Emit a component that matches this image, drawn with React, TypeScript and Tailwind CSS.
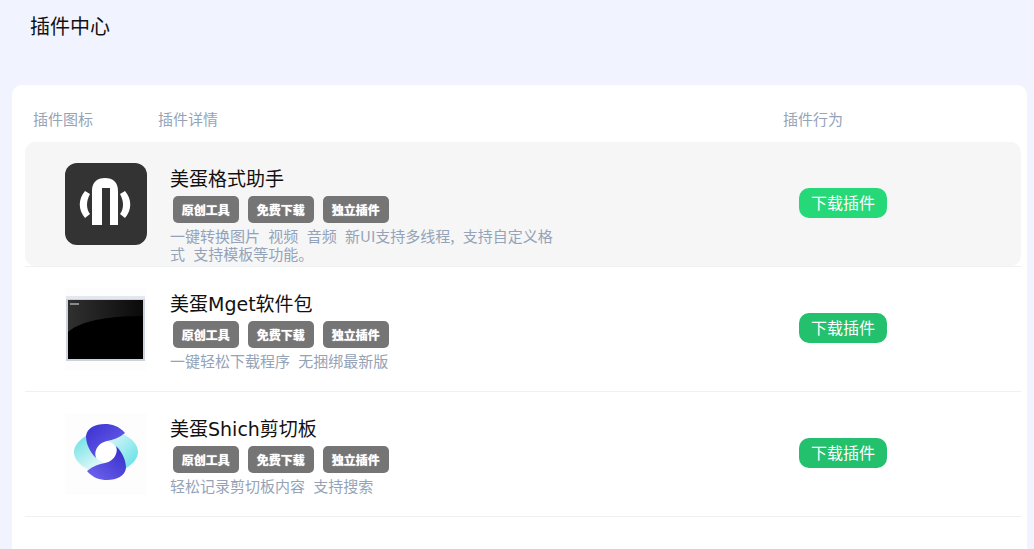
import type { ReactNode } from "react";

const FONT = "[font-family:'Noto_Sans_CJK_SC','Liberation_Sans',sans-serif]";

function FormatIcon() {
  return (
    <svg width="82" height="82" viewBox="0 0 82 82">
      <rect width="82" height="82" rx="12" fill="#333333" />
      <path d="M27 62V28C27 19 32 15 40 15C48 15 53 19 53 28V62H45V25H37V62Z" fill="#ffffff" />
      <path d="M20 28L25 31C21 38 21 46 25 51L20 55C13 47 13 36 20 28Z" fill="#ffffff" />
      <path d="M60 28L55 31C59 38 59 46 55 51L60 55C67 47 67 36 60 28Z" fill="#ffffff" />
    </svg>
  );
}

function TerminalIcon() {
  return (
    <svg width="82" height="82" viewBox="0 0 82 82">
      <defs>
        <linearGradient id="gloss" x1="0" y1="0" x2="1" y2="0">
          <stop offset="0" stopColor="#303030" />
          <stop offset="1" stopColor="#0a0a0a" />
        </linearGradient>
      </defs>
      <rect width="82" height="82" fill="#fdfdfd" />
      <rect x="1" y="8" width="79" height="65" fill="#ccd3de" />
      <rect x="1" y="8" width="79" height="3" fill="#e4e8ee" />
      <rect x="3" y="12" width="75" height="59" fill="#000000" />
      <path d="M3 12H78V28C50 28 18 31 3 44Z" fill="url(#gloss)" />
      <rect x="5" y="15" width="9" height="2" fill="#8a8a8a" />
    </svg>
  );
}

function ClipIcon() {
  return (
    <svg width="82" height="82" viewBox="0 0 82 82">
      <defs>
        <linearGradient id="cyanL" x1="0" y1="0" x2="0.6" y2="1">
          <stop offset="0" stopColor="#62dfe2" />
          <stop offset="1" stopColor="#e4f8f9" />
        </linearGradient>
        <linearGradient id="cyanR" x1="0" y1="0" x2="1" y2="1">
          <stop offset="0" stopColor="#e6f8fa" />
          <stop offset="1" stopColor="#5adfe4" />
        </linearGradient>
        <linearGradient id="blueT" x1="0" y1="0" x2="1" y2="1">
          <stop offset="0" stopColor="#3a30cf" />
          <stop offset="1" stopColor="#6f66ee" />
        </linearGradient>
        <linearGradient id="blueB" x1="0" y1="1" x2="1" y2="0">
          <stop offset="0" stopColor="#7167f0" />
          <stop offset="1" stopColor="#332ac8" />
        </linearGradient>
      </defs>
      <rect width="82" height="82" fill="#fdfdfe" />
      <path d="M22 22C14 27 9 33 9 39C9 47 16 53 24 57C30 53 36 51 41 50C33 49 28 42 30 36Z" fill="url(#cyanL)" />
      <path d="M60 56C68 51 73 45 73 39C73 31 66 25 58 21C52 25 46 27 41 28C49 29 54 36 52 42Z" fill="url(#cyanR)" />
      <circle cx="41" cy="39" r="10.5" fill="#ffffff" />
      <path d="M60 20C54 13 47 11 40 11C30 11 22 15 21 23C21 31 25 39 31 45C30 42 30 40 31 37C33 32 37 29 42 28C48 27 54 25 60 20Z" fill="url(#blueT)" />
      <path d="M22 58C28 65 35 67 42 67C52 67 60 63 61 55C61 47 57 39 51 33C52 36 52 38 51 41C49 46 45 49 40 50C34 51 28 53 22 58Z" fill="url(#blueB)" />
    </svg>
  );
}

interface Plugin {
  icon: ReactNode;
  name: string;
  desc: string;
  active?: boolean;
}

const plugins: Plugin[] = [
  {
    icon: <FormatIcon />,
    name: "美蛋格式助手",
    desc: "一键转换图片 视频 音频 新UI支持多线程, 支持自定义格式 支持模板等功能。",
    active: true,
  },
  { icon: <TerminalIcon />, name: "美蛋Mget软件包", desc: "一键轻松下载程序 无捆绑最新版" },
  { icon: <ClipIcon />, name: "美蛋Shich剪切板", desc: "轻松记录剪切板内容 支持搜索" },
];

const tags = ["原创工具", "免费下载", "独立插件"];

function PluginRow({ plugin }: { plugin: Plugin }) {
  return (
    <div className="h-[125px] border-b border-[#eef1f4]">
      <div
        className={`grid h-[124px] grid-cols-[145px_629px_1fr] rounded-[10px] ${plugin.active ? "bg-[#f6f6f6]" : ""}`}
      >
        <div className="flex items-center pl-[40px]">{plugin.icon}</div>
        <div className="pt-[25px]">
          <div className="h-[25px] text-[19px] leading-[25px] text-[#111111] [font-family:'DejaVu_Sans','Noto_Sans_CJK_SC',sans-serif]">
            {plugin.name}
          </div>
          <div className="mt-[4px] ml-[3px] flex gap-[9.5px]">
            {tags.map((tag) => (
              <span
                key={tag}
                className="flex h-[27px] w-[65.5px] items-center justify-center rounded-[5px] bg-[#757575] text-[12px] font-bold text-white [text-shadow:0_0_1px_#ffffff]"
              >
                {tag}
              </span>
            ))}
          </div>
          <p className="mt-[4px] w-[385px] text-[15px] leading-[18px] text-[#94a3b8] [word-spacing:5px]">
            {plugin.desc}
          </p>
        </div>
        <div className="flex items-center pb-[3px]">
          <button
            className={`h-[30px] w-[88px] rounded-[10px] pb-[1px] text-[16px] text-white ${plugin.active ? "bg-[#25d978]" : "bg-[#23c06d]"}`}
          >
            下载插件
          </button>
        </div>
      </div>
    </div>
  );
}

export default function App() {
  return (
    <div className={`h-[549px] overflow-hidden bg-[#f1f4ff] ${FONT}`}>
      <h1 className="pt-[12px] pl-[30px] text-[20px] leading-[28px] font-normal text-[#111111]">插件中心</h1>
      <div className="mt-[45px] ml-[12px] h-[500px] w-[1015px] rounded-[10px] bg-white pr-[6px] pl-[13px]">
        <div className="grid h-[57px] grid-cols-[125px_625px_1fr] items-center px-[8px] pt-[12px] text-[15px] text-[#94a3b8]">
          <span>插件图标</span>
          <span>插件详情</span>
          <span>插件行为</span>
        </div>
        {plugins.map((plugin) => (
          <PluginRow key={plugin.name} plugin={plugin} />
        ))}
      </div>
    </div>
  );
}
